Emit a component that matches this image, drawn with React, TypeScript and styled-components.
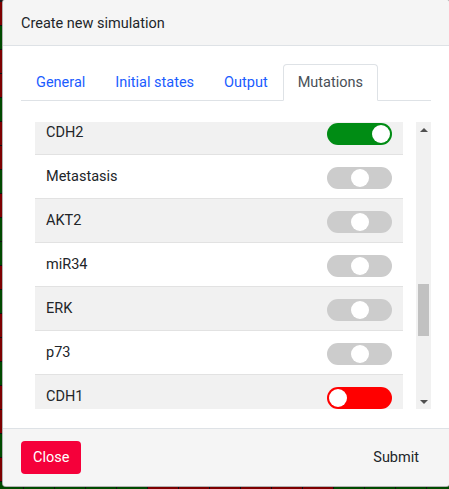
import { useLayoutEffect, useRef, useState } from 'react';
import styled, { createGlobalStyle } from 'styled-components';

type ToggleState = 'on' | 'off' | 'neutral';

const hiddenBefore = [
  'p53', 'p63', 'NICD', 'TGFbeta', 'ZEB1', 'ZEB2', 'SNAI1', 'SNAI2', 'TWIST1',
  'miR200', 'miR203', 'DKK1', 'CTNNB1', 'GF', 'ECM', 'DNAdamage', 'AKT1', 'SMAD',
];

const visible: { name: string; state: ToggleState }[] = [
  { name: 'CDH2', state: 'on' },
  { name: 'Metastasis', state: 'neutral' },
  { name: 'AKT2', state: 'neutral' },
  { name: 'miR34', state: 'neutral' },
  { name: 'ERK', state: 'neutral' },
  { name: 'p73', state: 'neutral' },
  { name: 'CDH1', state: 'off' },
];

const hiddenAfter = ['VIM', 'Invasion', 'Migration', 'EMT', 'Apoptosis', 'CellCycleArrest', 'NOTCH'];

const mutations = [
  ...hiddenBefore.map((name) => ({ name, state: 'neutral' as ToggleState })),
  ...visible,
  ...hiddenAfter.map((name) => ({ name, state: 'neutral' as ToggleState })),
];

const ROW_H = 44;
const ARROW_H = 15;

const heatCells = Array.from({ length: 15 * 21 }, (_, i) => {
  const seed = (i * 7919 + 13) % 11;
  return seed < 6 ? 'red' : 'green';
});

function App() {
  const listRef = useRef<HTMLDivElement>(null);
  const [thumb, setThumb] = useState({ top: 0, height: 0 });

  const measure = () => {
    const el = listRef.current;
    if (!el) return;
    const track = el.clientHeight - ARROW_H * 2;
    const height = Math.max(20, (track * el.clientHeight) / el.scrollHeight);
    const max = el.scrollHeight - el.clientHeight;
    const top = max > 0 ? (el.scrollTop / max) * (track - height) : 0;
    setThumb({ top, height });
  };

  useLayoutEffect(() => {
    if (listRef.current) listRef.current.scrollTop = hiddenBefore.length * ROW_H + 11;
    measure();
  }, []);

  return (
    <>
      <GlobalStyle />
      <Page>
        <HeatGrid>
          {heatCells.map((c, i) => (
            <HeatCell key={i} $tone={c} />
          ))}
        </HeatGrid>
        <Modal>
          <Header>Create new simulation</Header>
          <Body>
            <Tabs>
              <Tab>General</Tab>
              <Tab>Initial states</Tab>
              <Tab>Output</Tab>
              <Tab $active>Mutations</Tab>
            </Tabs>
            <ListFrame>
              <List ref={listRef} onScroll={measure}>
                {mutations.map((m, i) => (
                  <Row key={m.name} $striped={i % 2 === 0}>
                    <span>{m.name}</span>
                    <Toggle $state={m.state}>
                      <Knob />
                    </Toggle>
                  </Row>
                ))}
              </List>
              <ScrollBar>
                <Arrow $dir="up" />
                <Track>
                  <Thumb style={{ top: thumb.top, height: thumb.height }} />
                </Track>
                <Arrow $dir="down" />
              </ScrollBar>
            </ListFrame>
          </Body>
          <Footer>
            <CloseButton>Close</CloseButton>
            <SubmitButton>Submit</SubmitButton>
          </Footer>
        </Modal>
      </Page>
    </>
  );
}

const GlobalStyle = createGlobalStyle`
  html, body {
    margin: 0;
    padding: 0;
    background: #1a1a1a;
  }
  body {
    font-family: Roboto, "Liberation Sans", sans-serif;
    color: #212529;
  }
`;

const Page = styled.div`
  position: relative;
  width: 449px;
  height: 489px;
  overflow: hidden;
`;

const HeatGrid = styled.div`
  display: grid;
  grid-template-columns: repeat(15, 30px);
  grid-auto-rows: 23px;
  gap: 1px;
  background: #111;
  margin-left: -7px;
  margin-top: 2px;
  width: max-content;
`;

const HeatCell = styled.div<{ $tone: string }>`
  background: ${(p) => (p.$tone === 'red' ? '#7d0000' : '#004a00')};
`;

const Modal = styled.div`
  position: absolute;
  top: -1px;
  left: 2px;
  width: 448px;
  height: 488px;
  display: flex;
  flex-direction: column;
  background: #fff;
  border: 1px solid rgba(0, 0, 0, 0.3);
  border-radius: 4px;
  box-sizing: border-box;
  overflow: hidden;
`;

const Header = styled.div`
  height: 46px;
  flex-shrink: 0;
  display: flex;
  align-items: center;
  padding: 1px 18px 0;
  box-sizing: border-box;
  background: #f5f5f5;
  border-bottom: 1px solid #dee2e6;
  font-size: 14.5px;
  color: #212529;
`;

const Body = styled.div`
  display: flex;
  flex-direction: column;
  padding: 18px 18px 19px;
  gap: 21px;
`;

const Tabs = styled.div`
  display: flex;
  height: 37px;
  box-sizing: border-box;
  border-bottom: 1px solid #dee2e6;
  width: 410px;
`;

const Tab = styled.div<{ $active?: boolean }>`
  display: flex;
  align-items: center;
  padding: 0 14px;
  margin-bottom: -1px;
  font-size: 14.5px;
  border: 1px solid ${(p) => (p.$active ? '#dee2e6' : 'transparent')};
  border-bottom-color: ${(p) => (p.$active ? '#fff' : 'transparent')};
  border-radius: 4px 4px 0 0;
  background: ${(p) => (p.$active ? '#fff' : 'transparent')};
  color: ${(p) => (p.$active ? '#495057' : '#1a5cff')};
`;

const ListFrame = styled.div`
  display: flex;
  height: 287px;
  margin-left: 14px;
  width: 396px;
`;

const List = styled.div`
  flex: 1;
  overflow-y: scroll;
  scrollbar-width: none;
  &::-webkit-scrollbar {
    display: none;
  }
`;

const ScrollBar = styled.div`
  width: 15px;
  display: flex;
  flex-direction: column;
  background: #f1f1f1;
`;

const Arrow = styled.div<{ $dir: 'up' | 'down' }>`
  height: ${ARROW_H}px;
  display: flex;
  align-items: center;
  justify-content: center;
  &::before {
    content: '';
    width: 0;
    height: 0;
    border-left: 4px solid transparent;
    border-right: 4px solid transparent;
    ${(p) => (p.$dir === 'up' ? 'border-bottom: 4px solid #505050;' : 'border-top: 4px solid #505050;')}
  }
`;

const Track = styled.div`
  flex: 1;
  position: relative;
`;

const Thumb = styled.div`
  position: absolute;
  left: 2px;
  right: 2px;
  background: #c1c1c1;
`;

const Row = styled.div<{ $striped: boolean }>`
  height: ${ROW_H}px;
  box-sizing: border-box;
  margin-right: 13px;
  display: flex;
  align-items: center;
  justify-content: space-between;
  padding: 0 11px;
  border-bottom: 1px solid #e2e2e2;
  background: ${(p) => (p.$striped ? '#f1f1f1' : '#fff')};
  font-size: 14.5px;
  color: #212529;
`;

const toggleColor: Record<ToggleState, string> = {
  on: '#008c14',
  off: '#ff0000',
  neutral: '#cccccc',
};

const Toggle = styled.div<{ $state: ToggleState }>`
  width: 65px;
  height: 22px;
  border-radius: 11px;
  background: ${(p) => toggleColor[p.$state]};
  display: flex;
  align-items: center;
  justify-content: ${(p) =>
    p.$state === 'on' ? 'flex-end' : p.$state === 'off' ? 'flex-start' : 'center'};
  padding: 0 2px;
  margin-top: 2px;
  box-sizing: border-box;
`;

const Knob = styled.div`
  width: 18px;
  height: 18px;
  border-radius: 50%;
  background: #fff;
`;

const Footer = styled.div`
  flex: 1;
  display: flex;
  align-items: center;
  justify-content: space-between;
  padding: 0 18px;
  background: #f5f5f5;
  border-top: 1px solid #dee2e6;
`;

const CloseButton = styled.button`
  height: 33px;
  margin-top: -1px;
  padding: 0 12px;
  border: none;
  border-radius: 4px;
  background: #f5003a;
  color: #fff;
  font-family: inherit;
  font-size: 14.5px;
`;

const SubmitButton = styled.button`
  height: 33px;
  padding: 0 12px;
  border: none;
  background: transparent;
  color: #212529;
  font-family: inherit;
  font-size: 14.5px;
`;

export default App;
